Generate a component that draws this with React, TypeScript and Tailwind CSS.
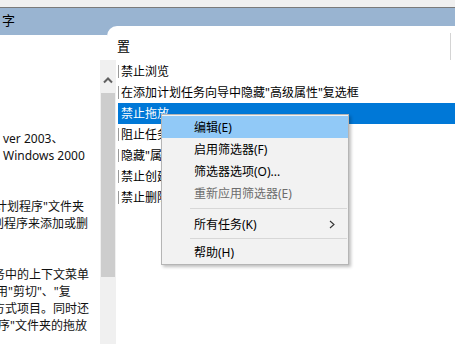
import React from "react";

const font = { fontFamily: '"Noto Sans", "Noto Sans CJK SC", sans-serif' };

const leftLines: { t: string; ml: number }[] = [
  { t: "ver 2003、", ml: 3 },
  { t: "Windows 2000", ml: 3 },
  { t: "", ml: 0 },
  { t: "", ml: 0 },
  { t: "计划程序\"文件夹", ml: -5 },
  { t: "划程序来添加或删", ml: -8 },
  { t: "", ml: 0 },
  { t: "", ml: 0 },
  { t: "务中的上下文菜单", ml: -7 },
  { t: "用\"剪切\"、\"复", ml: -4 },
  { t: "方式项目。同时还", ml: -7 },
  { t: "序\"文件夹的拖放", ml: -2 },
];

const rows = [
  "禁止浏览",
  "在添加计划任务向导中隐藏\"高级属性\"复选框",
  "禁止拖放",
  "阻止任务运行或结束",
  "隐藏\"属性\"选项卡",
  "禁止创建新任务",
  "禁止删除任务",
];

function MenuItem({
  label,
  active,
  disabled,
  arrow,
}: {
  label: string;
  active?: boolean;
  disabled?: boolean;
  arrow?: boolean;
}) {
  return (
    <div
      className={`flex items-center h-[22px] pl-[32px] pr-[12px] ${
        active ? "bg-[#91c9f7]" : ""
      } ${disabled ? "text-[#6d6d6d]" : "text-black"}`}
    >
      <span className="flex-1 leading-[17px]">{label}</span>
      {arrow && (
        <svg width="6" height="9" viewBox="0 0 6 9" className="mr-[1px]">
          <path d="M1 1 L5 4.5 L1 8" fill="none" stroke="#333" strokeWidth="1.1" />
        </svg>
      )}
    </div>
  );
}

function Sep({ h }: { h: string }) {
  return (
    <div className={`flex items-center ${h} pl-[28px] pr-[1px]`}>
      <div className="h-px w-full bg-[#d7d7d7]" />
    </div>
  );
}

export default function App() {
  return (
    <div
      className="relative w-[455px] h-[344px] overflow-hidden bg-white text-[12px] text-black text-left"
      style={font}
    >
      {/* top strip */}
      <div className="h-[7px] bg-[#f0f0f0]" />
      <div className="h-px bg-[#7a7a7a]" />
      {/* header area */}
      <div className="flex h-[52px]">
        <div className="w-[107px] shrink-0 flex flex-col">
          <div className="h-[27px] bg-[#99b4d1] flex items-start justify-start pl-[2px] pt-[4px]">
            <span className="leading-[17px] text-[13px]">字</span>
          </div>
          <div className="flex-1 bg-white" />
        </div>
        <div className="flex-1 flex flex-col bg-[#99b4d1]">
          <div className="h-[18px]" />
          <div className="flex-1 bg-white rounded-tl-[10px] flex">
            <div className="flex-1 pl-[10px] pt-[12px] leading-[17px] text-[13px]">置</div>
            <div className="w-px bg-[#d4d4d4] mt-[7px] mr-[4px]" />
          </div>
        </div>
      </div>
      {/* body */}
      <div className="flex h-[284px]">
        <div className="w-[100px] shrink-0 overflow-hidden pt-[70px] bg-white flex flex-col items-start">
          {leftLines.map((l, i) => (
            <div
              key={i}
              className="h-[17px] leading-[17px] whitespace-nowrap text-[#111] text-left"
              style={{ marginLeft: l.ml }}
            >
              {l.t}
            </div>
          ))}
        </div>
        <div className="w-[16px] shrink-0 bg-[#f0f0f0] flex flex-col">
          <div className="h-[33px] flex justify-center pt-[17px]">
            <svg width="10" height="7" viewBox="0 0 10 7">
              <path d="M1 5.5 L5 1.5 L9 5.5" fill="none" stroke="#606060" strokeWidth="2" />
            </svg>
          </div>
          <div className="h-[184px] mx-[1px] bg-[#cdcdcd]" />
        </div>
        <div className="flex-1 pt-[1px] overflow-hidden">
          {rows.map((r, i) => {
            const sel = i === 2;
            return (
              <div key={i} className="flex items-center h-[21px] pl-[2px]">
                {sel ? (
                  <div className="flex-1 h-[21px] bg-[#0078d7] text-white pl-[3px] leading-[21px] whitespace-nowrap">
                    {r}
                  </div>
                ) : (
                  <>
                    <div className="w-px h-[13px] bg-[#9a9a9a]" />
                    <div className="pl-[2px] leading-[21px] whitespace-nowrap">{r}</div>
                  </>
                )}
              </div>
            );
          })}
        </div>
      </div>
      {/* context menu */}
      <div className="absolute left-[161px] top-[114px] w-[188px] bg-[#f2f2f2] border border-[#b5b5b5] py-[1px] shadow-[2px_2px_3px_rgba(0,0,0,0.25)]">
        <MenuItem label="编辑(E)" active />
        <MenuItem label="启用筛选器(F)" />
        <MenuItem label="筛选器选项(O)..." />
        <MenuItem label="重新应用筛选器(E)" disabled />
        <Sep h="h-[9px]" />
        <MenuItem label="所有任务(K)" arrow />
        <Sep h="h-[6px]" />
        <MenuItem label="帮助(H)" />
      </div>
    </div>
  );
}
